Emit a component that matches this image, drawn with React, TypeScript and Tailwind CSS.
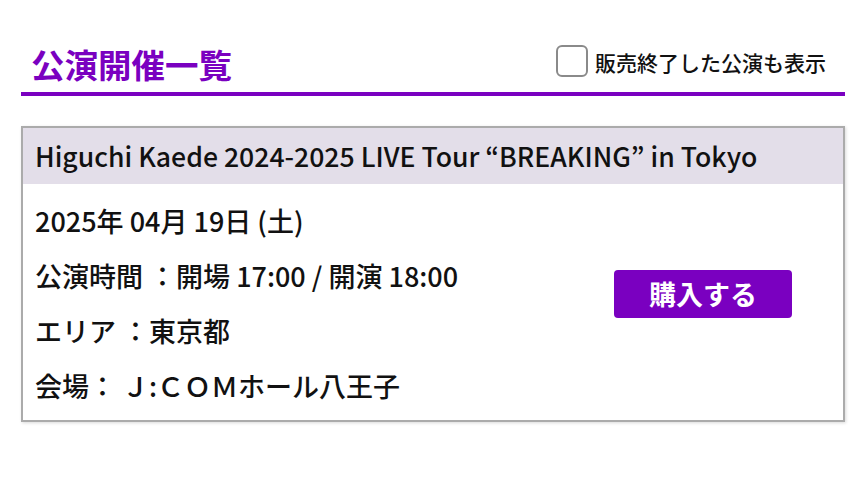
const rows = [
  "2025年 04月 19日 (土)",
  "公演時間 ：開場 17:00 / 開演 18:00",
  "エリア ：東京都",
  "会場： Ｊ:ＣＯＭホール八王子",
];

const App = () => {
  return (
    <div className="min-h-[478px] w-[864px] bg-white font-['Noto_Sans_CJK_JP',sans-serif] text-[#111]">
      <div className="ml-[21px] w-[824px]">
        <div className="flex items-start justify-between">
          <h1 className="mt-[38px] pl-[10px] text-[33.5px] leading-[52px] font-bold text-[#7a00c0]">
            公演開催一覧
          </h1>
          <label className="mt-[43px] mr-[19px] flex items-center gap-[7px]">
            <span className="block size-[32px] rounded-[6px] border-2 border-[#8a8a8a] bg-white" />
            <span className="pt-[3px] text-[21px] leading-[32px] font-medium">
              販売終了した公演も表示
            </span>
          </label>
        </div>
        <div className="mt-[2px] h-[4px] bg-[#7a00c0]" />

        <div className="mt-[30px] border-2 border-[#ababab] shadow-[1px_1px_3px_rgba(0,0,0,0.15)]">
          <div className="flex h-[56px] items-center bg-[#e3dee9] px-3 text-[26.6px] font-medium">
            Higuchi Kaede 2024-2025 LIVE Tour “BREAKING” in Tokyo
          </div>
          <div className="flex px-3 pt-[9px] pb-[7px]">
            <div className="flex-1">
              {rows.map((r) => (
                <p key={r} className="text-[27px] leading-[55px] font-medium">
                  {r}
                </p>
              ))}
            </div>
            <div className="mt-[77px] mr-[39px] self-start">
              <button className="flex h-[48px] w-[178px] items-center justify-center rounded-[4px] bg-[#7a00c0] text-[27px] font-bold text-white">
                購入する
              </button>
            </div>
          </div>
        </div>
      </div>
    </div>
  );
};

export default App;
